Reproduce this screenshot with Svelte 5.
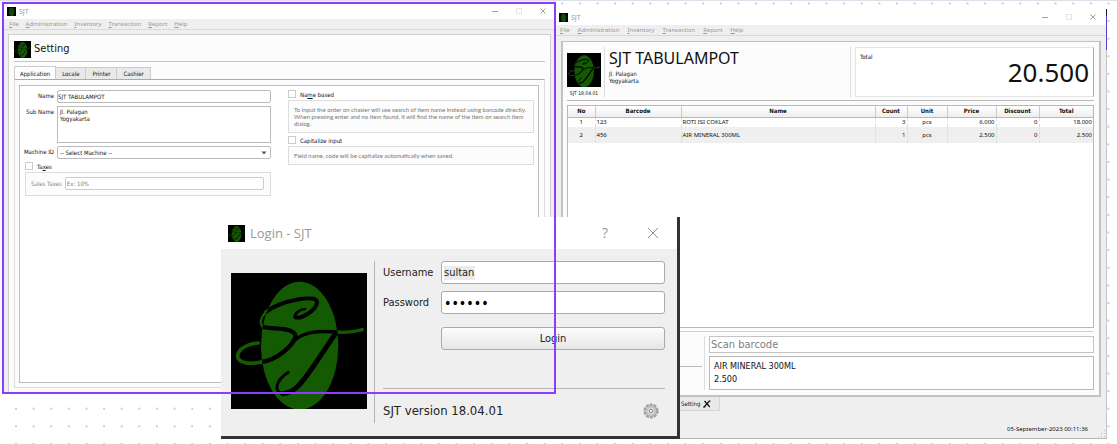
<script>
  const menus = ['File', 'Administration', 'Inventory', 'Transaction', 'Report', 'Help'];
  const tabs = ['Application', 'Locale', 'Printer', 'Cashier'];
  const columns = ['No', 'Barcode', 'Name', 'Count', 'Unit', 'Price', 'Discount', 'Total'];
  const items = [
    ['1', '123', 'ROTI ISI COKLAT', '3', 'pcs', '6.000', '0', '18.000'],
    ['2', '456', 'AIR MINERAL 300ML', '1', 'pcs', '2.500', '0', '2.500']
  ];
  let username = $state('sultan');
  let password = $state('sultan');
</script>

{#snippet strokes(color)}
  <g fill="none" stroke={color} stroke-linecap="round" stroke-linejoin="round">
    <path stroke-width="8" d="M222 108C205 109 188 124 193 132" />
    <path stroke-width="12" d="M193 132C206 140 256 114 258 88C262 62 150 82 105 117" />
    <path stroke-width="7" d="M105 117C88 134 83 154 98 162" />
    <path stroke-width="13" d="M98 162C130 170 190 162 194 190C186 218 140 260 92 267" />
    <path stroke-width="11" d="M92 267C50 276 20 268 20 248C22 227 50 212 82 210" />
    <path stroke-width="10" d="M194 199C222 178 258 172 318 177C345 180 372 176 394 170" />
    <path stroke-width="15" d="M314 181C270 244 236 302 206 334C192 350 174 360 156 362" />
    <path stroke-width="9" d="M156 362C126 358 134 322 172 298" />
  </g>
{/snippet}

{#snippet logo(id)}
  <svg class="logo" viewBox="0 0 408 408" role="img" aria-label="SJT">
    <clipPath {id}><ellipse cx="206" cy="218" rx="116" ry="192" /></clipPath>
    <rect width="408" height="408" fill="#000" />
    {@render strokes('#145a02')}
    <ellipse cx="206" cy="218" rx="116" ry="192" fill="#145a02" />
    <g clip-path="url(#{id})">{@render strokes('#000')}</g>
  </svg>
{/snippet}

{#snippet windowTop(id)}
  <header class="titlebar">
    <span class="mini">{@render logo(id)}</span>
    <span class="caption">SJT</span>
    <button class="ctl" aria-label="Minimize"><svg viewBox="0 0 6 6"><path d="M0 3.5H6" /></svg></button>
    <button class="ctl dim" aria-label="Maximize"><svg viewBox="0 0 6 6"><path d="M.5 .5H5.500V5.500H.5Z" /></svg></button>
    <button class="ctl" aria-label="Close"><svg viewBox="0 0 6 6"><path d="M.5 .5L5.500 5.500M5.500 .5L.5 5.500" /></svg></button>
  </header>
  <nav class="menubar">
    {#each menus as m}<button><u>{m[0]}</u>{m.slice(1)}</button>{/each}
  </nav>
{/snippet}

<main class="desktop">
  <svg class="dots" aria-hidden="true">
    <defs>
      <pattern id="grid" x="7.200" y="-6.400" width="17.620" height="17.620" patternUnits="userSpaceOnUse">
        <rect x="7.800" y="7.800" width="2" height="2" fill="#c9ced9" />
      </pattern>
    </defs>
    <rect width="100%" height="100%" fill="url(#grid)" />
  </svg>

  <section class="window setting">
    {@render windowTop('l1')}
    <div class="page">
      <div class="page-head"><span class="head-logo">{@render logo('l2')}</span><h1>Setting</h1></div>
      <div class="tabs" role="tablist">
        {#each tabs as t, i}<button role="tab" aria-selected={i === 0} class:on={i === 0}>{t}</button>{/each}
      </div>
      <div class="pane">
        <div class="form">
          <div class="col">
            <div class="fields">
              <label for="name">Name</label><input id="name" value="SJT TABULAMPOT" />
              <label for="sub">Sub Name</label><textarea id="sub" value={'Jl. Palagan\nYogyakarta'}></textarea>
              <label for="machine">Machine ID</label>
              <div class="select">
                <select id="machine"><option>-- Select Machine --</option></select>
                <svg viewBox="0 0 6 4"><path d="M.5 .5H5.500L3 3.500Z" /></svg>
              </div>
            </div>
            <label class="check"><input type="checkbox" /><span>Ta<u>x</u>es</span></label>
            <div class="group tax"><label for="tax">Sales Taxes</label><input id="tax" placeholder="Ex: 10%" disabled /></div>
          </div>
          <div class="col">
            <label class="check"><input type="checkbox" /><span>Na<u>m</u>e based</span></label>
            <p class="group">To input the order on chasier will use search of item name instead using barcode directly.<br />When pressing enter and no item found, it will find the name of the item on search item<br />dialog.</p>
            <label class="check"><input type="checkbox" /><span>Capitalize input</span></label>
            <p class="group">Field name, code will be capitalize automatically when saved.</p>
          </div>
        </div>
      </div>
    </div>
  </section>

  <section class="window cashier">
    {@render windowTop('l3')}
    <div class="sale">
      <div class="sale-head">
        <div class="brand">{@render logo('l4')}<span>SJT 18.04.01</span></div>
        <div class="shop"><h2>SJT TABULAMPOT</h2><p>Jl. Palagan<br />Yogyakarta</p></div>
        <div class="total"><span>Total</span><strong>20.500</strong></div>
      </div>
      <div class="list">
        <table>
          <colgroup>{#each columns as _, i}<col class="c{i}" />{/each}</colgroup>
          <thead><tr>{#each columns as c}<th>{c}</th>{/each}</tr></thead>
          <tbody>{#each items as row}<tr>{#each row as cell}<td>{cell}</td>{/each}</tr>{/each}</tbody>
        </table>
      </div>
      <div class="entry">
        <div class="rule"></div>
        <div class="scan">
          <input aria-label="Scan barcode" placeholder="Scan barcode" />
          <div class="last">AIR MINERAL 300ML<br />2.500</div>
        </div>
      </div>
    </div>
    <div class="doc-tabs">
      <button>Setting <svg viewBox="0 0 8 8"><path d="M1.500 1L6.800 7M6.500 1L1 7M0 7H2.500M5.500 1H7.500" /></svg></button>
    </div>
    <footer>05-September-2023 00:11:36
      <svg viewBox="0 0 8 8"><path d="M6 0h1v1h-1zM3 3h1v1h-1zM6 3h1v1h-1zM0 6h1v1h-1zM3 6h1v1h-1zM6 6h1v1h-1z" /></svg>
    </footer>
  </section>

  <section class="dialog">
    <header>
      <span class="dlg-logo">{@render logo('l5')}</span><span class="dlg-title">Login - SJT</span>
      <button aria-label="Help">?</button>
      <button aria-label="Close"><svg viewBox="0 0 12 12"><path d="M1 1L11 11M11 1L1 11" /></svg></button>
    </header>
    <form onsubmit={(e) => e.preventDefault()}>
      <div class="art">{@render logo('l6')}</div>
      <div class="creds">
        <div class="cred"><label for="user">Username</label><input id="user" bind:value={username} /></div>
        <div class="cred"><label for="pass">Password</label><input id="pass" type="password" bind:value={password} /></div>
        <button class="login">Login</button>
        <div class="version">
          <span>SJT version 18.04.01</span>
          <button type="button" aria-label="Settings">
            <svg viewBox="0 0 16 16">
              <circle cx="8" cy="8" r="6.300" fill="none" stroke="#a0a0a0" stroke-width="2.600" stroke-dasharray="2.900 1.050" />
              <circle cx="8" cy="8" r="5.400" fill="#d8d8d8" stroke="#a6a6a6" />
              <circle cx="8" cy="8" r="3.700" fill="none" stroke="#b8b8b8" stroke-width="1.500" stroke-dasharray="1.800 1.100" />
              <circle cx="8" cy="8" r="1.600" fill="#f4f4f4" stroke="#8f8f8f" />
            </svg>
          </button>
        </div>
      </div>
    </form>
  </section>
  <div class="selection"></div>
</main>

<style>
  :global(body) { margin: 0; background: #fff; }
  .desktop, .desktop :global(*) { box-sizing: border-box; }
  .desktop {
    position: relative; min-height: 100vh; overflow: hidden; border-top: 1px solid #dde0e8;
    font: 6px/7px "DejaVu Sans Condensed", "DejaVu Sans", sans-serif; color: #111;
  }
  h1, h2, p { margin: 0; font-weight: 400; }
  button, input, textarea, select { font: inherit; color: inherit; margin: 0; padding: 0; border: 0; background: none; outline: 0; }
  svg { display: block; }
  .dots { position: absolute; inset: 0; width: 100%; height: 100%; }
  .logo { width: 100%; aspect-ratio: 1; }

  .window { position: absolute; display: flex; flex-direction: column; background: #efefef; }
  .setting { left: 2px; right: 561px; top: 0; bottom: 51px; padding: 2px 5px 0 2px; }
  .cashier { left: 556px; right: 10px; top: 8px; bottom: 5px; border-right: 1px solid #c4c4c4; border-bottom: 1px solid #b5b5b5; }
  .cashier::after { content: ""; position: absolute; right: -1px; top: 0; width: 1px; height: 41px; background: linear-gradient(#181825 7px, #5b3fc8 7px); }
  .selection { position: absolute; left: 2px; right: 561px; top: 1px; bottom: 50px; border: 2px solid #8b3dff; pointer-events: none; }

  .titlebar { display: flex; align-items: center; height: 16px; padding: 0 8px 0 3px; background: #fff; margin-right: -3px; }
  .cashier .titlebar { padding-right: 10px; margin-right: 0; }
  .mini { width: 9px; }
  .caption { flex: 1; padding-left: 3px; color: #999; font: 7px/9px "Noto Sans", sans-serif; }
  .ctl { width: 6px; margin-left: 18px; }
  .ctl svg { width: 6px; height: 6px; fill: none; stroke: #888; stroke-width: .8; }
  .ctl.dim svg { stroke: #ddd; }
  .menubar { display: flex; gap: 7px; height: 11px; padding: 0 5px; margin-right: -3px; border-bottom: 1px solid #d9d9d9; color: #999; font: 6px/9px "Noto Sans", sans-serif; }
  .cashier .menubar { margin-right: 0; padding-left: 4px; gap: 8px; }

  .page { flex: 1; margin: 4px 0 0 4px; padding: 5px 5px 5px; display: flex; flex-direction: column; background: #fcfcfc; border: 1px solid #cfcfcf; border-bottom: 0; }
  .page-head { display: flex; align-items: center; gap: 3px; height: 22px; padding-bottom: 3px; border-bottom: 1px solid #c6c6c6; }
  .head-logo { width: 17px; }
  h1 { font: 11px/16px "DejaVu Sans Condensed", sans-serif; }
  .tabs { display: flex; margin-top: 4px; }
  .tabs button { height: 12px; margin-top: 1px; padding: 0 6px; background: #e9e9e9; border: 1px solid #ccc; border-left: 0; border-bottom: 0; }
  .tabs .on { height: 13px; margin: 0 0 -1px; padding: 0 5px; background: #fdfdfd; border-left: 1px solid #ccc; position: relative; }
  .pane { flex: 1; display: flex; padding: 5px 5px 4px 4px; background: #fcfcfc; border: 1px solid #dcdcdc; border-top-color: #aaa; }
  .form { flex: 1; display: grid; grid-template-columns: minmax(0, 1fr) minmax(0, 1fr); gap: 17px; padding: 4px 4px 0 5px; align-items: start; background: #fff; border: 1px solid #bcbcbc; }
  .fields { display: grid; grid-template-columns: 29px 1fr; gap: 3px; align-items: start; }
  .fields label { justify-self: end; white-space: nowrap; line-height: 12px; }
  .fields input, .select { height: 13px; border: 1px solid #bbb; border-radius: 2px; background: #fff; }
  .fields input, .fields textarea { width: 100%; }
  .fields textarea { height: 37px; border: 1px solid #bbb; padding: 1px 2px; resize: none; overflow: hidden; display: block; background: #fff; }
  .select { display: flex; align-items: center; padding-right: 3px; }
  .select select { flex: 1; appearance: none; padding-left: 2px; }
  .select svg { width: 6px; height: 4px; fill: #555; }
  .check { display: flex; align-items: center; gap: 4px; height: 8px; margin-top: 3px; }
  .col:last-child .check { margin-top: 0; }
  .check input { appearance: none; width: 8px; height: 8px; border: 1px solid #ccc; background: #fff; }
  .group { margin: 2px 0 3px; padding: 5px; border: 1px solid #ddd; background: #fcfcfc; color: #888; white-space: nowrap; }
  p.group { font-family: Lato, sans-serif; color: #777; }
  .tax { display: flex; align-items: center; gap: 3px; padding: 4px 6px 5px 5px; }
  .tax input { flex: 1; height: 13px; border: 1px solid #ccc; border-radius: 2px; padding-left: 1px; background: #fff; }
  input::placeholder { color: #808080; opacity: 1; }

  .sale { flex: 1; display: flex; flex-direction: column; margin: 5px 5px 0 5px; padding: 5px 5px 5px 4px; background: #fcfcfc; border: 2px solid #c2c2c2; border-top-width: 1px; }
  .sale-head { display: flex; height: 54px; padding-bottom: 3px; border-bottom: 1px solid #b8b8b8; }
  .brand { width: 38px; padding: 6px 3px 0 0; border-right: 1px solid #ddd; font: 5px/12px "DejaVu Sans Condensed", sans-serif; white-space: nowrap; text-align: center; }
  .shop { flex: 1; padding-left: 4px; border-right: 1px solid #ddd; }
  h2 { font: 16px/22px "Noto Sans", sans-serif; }
  .shop p { margin-top: 1px; }
  .total { width: 239px; margin-left: 4px; padding: 5px 4px; display: flex; justify-content: space-between; background: #fff; border: 1px solid #e4e4e4; border-right-color: #aaa; }
  .total strong { align-self: center; font: 26px/32px "Noto Sans", sans-serif; }
  .list { flex: 1; margin: 4px 0 3px; background: #fff; border: 1px solid #b8b8b8; }
  table { width: 100%; table-layout: fixed; border-collapse: collapse; font: 6px/8px "Noto Sans", sans-serif; }
  th, td { padding: 0 1px; text-align: center; border-right: 1px dashed #ddd; white-space: nowrap; }
  th { height: 11px; font: bold 6px/8px "DejaVu Sans Condensed", sans-serif; border-right: 1px solid #ccc; border-bottom: 1px solid #b8b8b8; background: linear-gradient(#fff, #eee); }
  th:last-child, td:last-child { border-right: 0; }
  td { height: 10px; }
  tbody tr:nth-child(2) td { height: 16px; background: #efefef; }
  td:nth-child(2), td:nth-child(3) { text-align: left; }
  td:nth-child(4), td:nth-child(n + 6) { text-align: right; }
  .c0 { width: 27px; } .c1 { width: 86px; } .c3 { width: 32px; } .c4 { width: 40px; } .c5 { width: 49px; } .c6 { width: 43px; } .c7 { width: 54px; }
  .entry { display: flex; padding-top: 4px; border-top: 1px solid #d0d0d0; }
  .rule { width: 135px; height: 31px; margin-right: 2px; border-bottom: 1px solid #bbb; }
  .scan { flex: 1; padding-left: 4px; border-left: 1px solid #ddd; }
  .scan input { display: block; width: 100%; height: 17px; padding: 0 1px; border: 1px solid #c4c4c4; background: #fff; font-size: 11px; }
  .last { margin-top: 3px; padding: 3px 4px; border: 1px solid #b8b8b8; background: #fff; font-size: 9px; line-height: 13px; }
  .doc-tabs { height: 15px; padding-left: 122px; }
  .doc-tabs button { display: flex; align-items: center; gap: 3px; height: 14px; padding: 0 8px 0 2px; border: 1px solid #d6d6d6; border-top: 0; background: #e9e9e9; }
  .doc-tabs svg { width: 8px; height: 8px; fill: none; stroke: #111; stroke-width: 1.2; }
  footer { display: flex; justify-content: flex-end; align-items: center; gap: 10px; height: 26px; padding: 7px 0 0; font: 6px/8px "Noto Sans", sans-serif; }
  footer svg { width: 8px; height: 8px; fill: #bbb; align-self: flex-end; }

  .dialog { position: absolute; left: 221px; top: 216px; width: 459px; background: #efefef; border: solid #303234; border-width: 0 3px 3px 0; font-size: 11px; line-height: 14px; }
  .dialog header { display: flex; align-items: center; height: 32px; padding: 0 18px 0 7px; background: #fff; color: #999; }
  .dlg-logo { width: 17px; flex: none; }
  .dlg-title { flex: 1; padding-left: 5px; font: 13px/18px "Open Sans", sans-serif; }
  .dialog header button { width: 12px; margin-left: 36px; font: 14px/18px "Open Sans", sans-serif; }
  .dialog header button svg { width: 12px; height: 12px; fill: none; stroke: #8c8c8c; }
  form { display: flex; padding: 12px 12px 13px 10px; }
  .art { width: 144px; padding: 12px 7px 14px 0; border-right: 1px solid #b4b4b4; }
  .creds { flex: 1; padding-left: 8px; color: #222; }
  .cred { display: flex; align-items: center; margin-bottom: 7px; }
  .cred label { width: 58px; }
  .cred input { flex: 1; min-width: 0; height: 23px; padding: 0 2px; border: 1px solid #aaa; border-radius: 3px; background: #fff; }
  #user { background: linear-gradient(#ebebeb, #ebebeb) 2px center / 31px 14px no-repeat #fff; }
  #pass { font-size: 14px; color: #000; }
  .login { display: block; width: calc(100% - 58px); height: 23px; margin: 13px 0 0 58px; border: 1px solid #aaa; border-radius: 3px; background: linear-gradient(#fcfcfc, #e6e6e6); }
  .version { display: flex; justify-content: space-between; align-items: center; margin-top: 38px; padding: 14px 6px 0 0; border-top: 1px solid #b4b4b4; font-size: 13px; line-height: 16px; }
  .version svg { width: 16px; height: 16px; }
</style>
